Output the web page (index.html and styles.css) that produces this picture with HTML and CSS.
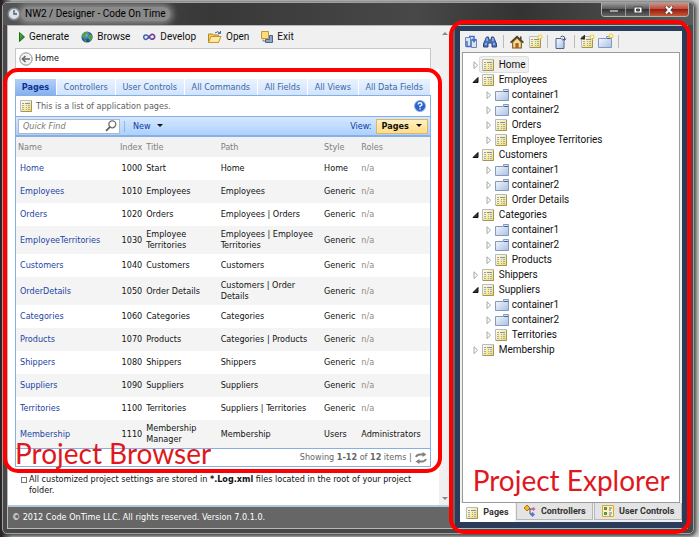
FILE: index.html
```html
<!DOCTYPE html>
<html lang="en">
<head>
  <meta charset="UTF-8">
  <meta name="viewport" content="width=device-width, initial-scale=1.0">
  <title>NW2 / Designer - Code On Time</title>
  <link rel="stylesheet" href="styles.css">
</head>
<body>

  <!-- Icon set -->
  <svg class="sprite" aria-hidden="true">
    <defs>
      <linearGradient id="gYellow" x1="0" y1="0" x2="1" y2="1"><stop offset="0" stop-color="#fffef0"/><stop offset="1" stop-color="#f0dc60"/></linearGradient>
      <linearGradient id="gBlue" x1="0" y1="0" x2="1" y2="1"><stop offset="0" stop-color="#fafcff"/><stop offset="1" stop-color="#a9c0e4"/></linearGradient>
      <linearGradient id="gGreen" x1="0" y1="0" x2="1" y2="1"><stop offset="0" stop-color="#5cc24c"/><stop offset="1" stop-color="#0c5c10"/></linearGradient>
      <radialGradient id="gGlobe" cx="35%" cy="30%"><stop offset="0" stop-color="#9cc8f4"/><stop offset="1" stop-color="#1c4a98"/></radialGradient>
    </defs>
    <symbol id="page" viewBox="0 0 12 12">
      <path d="M.5.5h11v11H.5z" fill="url(#gYellow)" stroke="#b4bcc8"/>
      <path d="M11.500 1v10.500H1" fill="none" stroke="#a4945c"/>
      <path d="M2 3.500h2" stroke="#e08468"/><path d="M5 3.500h5" stroke="#6a94dc"/>
      <path d="M2 5.500h2M2 7.500h2M2 9.500h2M6 5.500h1M8 5.500h2M6 7.500h1M8 7.500h2M6 9.500h1M8 9.500h2" stroke="#a0acc0"/>
    </symbol>
    <symbol id="folder" viewBox="0 0 14 12">
      <path d="M.5 2.500h8v-2h5v11H.5z" fill="url(#gBlue)" stroke="#8499bc"/>
      <path d="M9 2.500h4" stroke="#486498"/>
    </symbol>
    <symbol id="closed" viewBox="0 0 8 8"><path d="M2 .8 5.600 4.200 2 7.600z" fill="#fff" stroke="#a6a6a6"/></symbol>
    <symbol id="open" viewBox="0 0 8 8"><path d="M6 1.500V6.500H1z" fill="#333" stroke="#111"/></symbol>
    <symbol id="star" viewBox="0 0 6 6"><path d="M3 0v6M0 3h6M1 1l4 4M5 1 1 5" stroke="#f4c83c"/><circle cx="3" cy="3" r="1.300" fill="#fff6a0"/></symbol>
    <symbol id="play" viewBox="0 0 6 10"><path d="M.5.5 5.500 5 .5 9.500z" fill="url(#gGreen)" stroke="#18701c"/></symbol>
    <symbol id="globe" viewBox="0 0 12 12">
      <circle cx="6" cy="6" r="5.600" fill="url(#gGlobe)"/>
      <path d="M1.500 3Q4 0 6.500 1L6 3 4.500 4 5 6 2.500 6.500 1 5zM7 5l3-2 1.500 3-1 3-2 1.500L8 8 6.500 7zM3 8l2 1 .5 2-2-.5z" fill="#4ea444"/>
    </symbol>
    <symbol id="loop" viewBox="0 0 14 8">
      <path d="M7 4Q4.800 6.500 3.500 6.500A2.300 2.300 0 1 1 5.500 2.500L9 5.800" fill="none" stroke="#3c62b4" stroke-width="1.600"/>
      <path d="M6 5.300 8.200 2.500Q10 .8 11.500 1.600A2.400 2.400 0 1 1 8.800 5.800" fill="none" stroke="#6e3c98" stroke-width="1.600"/>
    </symbol>
    <symbol id="opened" viewBox="0 0 14 13">
      <path d="M.5 3.500h4l1 1h5v7.500H.5z" fill="#f4cc60" stroke="#b88820"/>
      <path d="M.5 12 3 6h10l-2.500 6z" fill="#ffe9a0" stroke="#c49830"/>
      <path d="M7 2.500Q10 0 12 2.500M12.500.5v2.500h-2.500" fill="none" stroke="#3c64ac"/>
    </symbol>
    <symbol id="exit" viewBox="0 0 12 12">
      <path d="M.5.5h7v7h-7z" fill="#ffdc78" stroke="#c09838"/>
      <path d="M8.500 4.500h3v7h-7v-3h4z" fill="#8ba4d0" stroke="#50648c"/>
      <path d="M2 8.500v1.500h2" fill="none" stroke="#777"/>
    </symbol>
    <symbol id="back" viewBox="0 0 14 14">
      <circle cx="7" cy="7" r="6.200" fill="#f2f2f2" stroke="#8c8c8c"/>
      <path d="M11 7H4M6.500 4 3.500 7l3 3" fill="none" stroke="#666" stroke-width="1.600"/>
    </symbol>
    <symbol id="help" viewBox="0 0 12 12">
      <circle cx="6" cy="6" r="5.500" fill="#2c62c8" stroke="#8ab0ec"/>
      <path d="M4 4.500Q4.200 2.800 6 2.800T8 4.500Q8 5.500 6 6.200v1M6 8.200v1.300" fill="none" stroke="#fff" stroke-width="1.400"/>
    </symbol>
    <symbol id="search" viewBox="0 0 11 11"><circle cx="6.700" cy="4" r="3.200" fill="#fff" stroke="#707070" stroke-width="1.200"/><path d="M4.500 6.300 1 10" stroke="#606060" stroke-width="1.600"/></symbol>
    <symbol id="refresh" viewBox="0 0 12 12"><path d="M1 5Q2 2.500 5 2.500h3M11 7Q10 9.500 7 9.500H4" fill="none" stroke="#808080" stroke-width="2"/><path d="M7.500 0v5l4-2.500zM4.500 7v5l-4-2.500z" fill="#808080"/></symbol>
    <symbol id="sync" viewBox="0 0 14 14">
      <path d="M1.500 2.500h5v9h-5zM7.500 4.500h5v8h-5z" fill="#d8e2f4" stroke="#7084ac"/>
      <path d="M5 1.500h5V6M8 4l2 2.500L12 4M3 6v5.500h4" fill="none" stroke="#3c70cc" stroke-width="1.500"/>
    </symbol>
    <symbol id="binoculars" viewBox="0 0 14 12">
      <path d="M3.500 1h2L6 4h2l.5-3h2l3 7v3H9V7H5v4H.5V8z" fill="#4c74c0" stroke="#2c4884"/>
      <path d="M2 8h2M10 8h2M4 2v3M10 2v3" stroke="#c8dafc"/>
    </symbol>
    <symbol id="house" viewBox="0 0 13 12">
      <path d="M2.500 6v5.500h8V6L6.500 2z" fill="#f8dc90" stroke="#785420"/>
      <path d="M.5 6.500 6.500 1l6 5.500M10 1v3" fill="none" stroke="#4c4428" stroke-width="1.500"/><path d="M5 7h3v4.500H5z" fill="#a86020"/>
    </symbol>
    <symbol id="document" viewBox="0 0 11 14">
      <path d="M.5 3.500h5l3 3v7h-8z" fill="url(#gBlue)" stroke="#506488"/><path d="M5 2Q7 0 9 2v3M7 3.500l2 2 1.500-2" fill="none" stroke="#405880"/>
    </symbol>
    <symbol id="nodes" viewBox="0 0 12 12">
      <path d="M3 0 6 3 3 6 0 3z" fill="#f0b828" stroke="#ac7810"/><path d="M5 4h4M6 4v5h2" fill="none" stroke="#555"/>
      <path d="M9.500 2l2 2-2 2-2-2z" fill="#d45cb0"/><path d="M8.500 7l2.500 2.500L8.500 12 6 9.500z" fill="#5478d4"/>
    </symbol>
    <symbol id="control" viewBox="0 0 12 12">
      <path d="M.5.5h11v11H.5z" fill="#fff2b8" stroke="#e0a82c"/><path d="M2.500 2.500h2v2h-2zM2.500 7.500h2v2h-2z" fill="#6cbc80" stroke="#3c8058"/><path d="M7 3h3M7 5h2M7 8h3M7 10h2" stroke="#4c74b8"/>
    </symbol>
    <symbol id="clock" viewBox="0 0 14 14"><circle cx="7" cy="7" r="5.800" fill="#dce2e8" stroke="#808890" stroke-width="1.500"/><path d="M7 3v4h3" fill="none" stroke="#4c5868" stroke-width="1.300"/></symbol>
  </svg>

  <div class="window">
    <header class="titlebar">
      <h1 class="title"><svg class="i14"><use href="#clock"/></svg><span>NW2 / Designer - Code On Time</span></h1>
      <div class="window-buttons">
        <button aria-label="Minimize"><svg viewBox="0 0 12 8"><path d="M1.500 4h9v2h-9z" fill="#fff" stroke="#444"/></svg></button>
        <button aria-label="Maximize"><svg viewBox="0 0 12 8"><path d="M2 1h8v6H2z" fill="#fff" stroke="#444"/><path d="M4.500 3h3v2h-3z" fill="#555" stroke="#444"/></svg></button>
        <button class="close" aria-label="Close"><svg viewBox="0 0 12 8"><path d="M2.500 0 9.500 8M9.500 0 2.500 8" stroke="#544" stroke-width="3.500"/><path d="M3 .5 9 7.500M9 .5 3 7.500" stroke="#fff" stroke-width="2"/></svg></button>
      </div>
    </header>

    <div class="content">
      <!-- Designer -->
      <main class="designer">
        <div class="scroll-area">
          <div class="view">
            <nav class="menu">
              <button><svg class="play"><use href="#play"/></svg>Generate</button>
              <button><svg class="i12"><use href="#globe"/></svg>Browse</button>
              <button><svg class="loop"><use href="#loop"/></svg>Develop</button>
              <button><svg class="i14"><use href="#opened"/></svg>Open</button>
              <button><svg class="i12"><use href="#exit"/></svg>Exit</button>
            </nav>
            <div class="crumbs"><svg class="i14"><use href="#back"/></svg><span>Home</span></div>

            <section class="browser">
              <nav class="tabs">
                <button class="active">Pages</button>
                <button>Controllers</button>
                <button>User Controls</button>
                <button>All Commands</button>
                <button>All Fields</button>
                <button>All Views</button>
                <button>All Data Fields</button>
              </nav>
              <div class="grid">
                <div class="description"><svg class="i12"><use href="#page"/></svg><span>This is a list of application pages.</span><svg class="i12 push"><use href="#help"/></svg></div>
                <div class="actions">
                  <div class="find"><input type="text" placeholder="Quick Find" aria-label="Quick Find"><svg class="i12"><use href="#search"/></svg></div>
                  <button class="new">New <i class="caret"></i></button>
                  <span class="push">View:</span>
                  <button class="view-picker">Pages <i class="caret"></i></button>
                </div>
                <table class="pages">
                  <colgroup><col class="c-name"><col class="c-index"><col class="c-title"><col class="c-path"><col class="c-style"><col></colgroup>
                  <thead>
                    <tr><th>Name</th><th>Index</th><th>Title</th><th>Path</th><th>Style</th><th>Roles</th></tr>
                  </thead>
                  <tbody>
                    <tr><td><a href="#">Home</a></td><td>1000</td><td>Start</td><td>Home</td><td>Home</td><td class="na">n/a</td></tr>
                    <tr><td><a href="#">Employees</a></td><td>1010</td><td>Employees</td><td>Employees</td><td>Generic</td><td class="na">n/a</td></tr>
                    <tr><td><a href="#">Orders</a></td><td>1020</td><td>Orders</td><td>Employees | Orders</td><td>Generic</td><td class="na">n/a</td></tr>
                    <tr class="tall"><td><a href="#">EmployeeTerritories</a></td><td>1030</td><td>Employee Territories</td><td>Employees | Employee Territories</td><td>Generic</td><td class="na">n/a</td></tr>
                    <tr><td><a href="#">Customers</a></td><td>1040</td><td>Customers</td><td>Customers</td><td>Generic</td><td class="na">n/a</td></tr>
                    <tr class="tall"><td><a href="#">OrderDetails</a></td><td>1050</td><td>Order Details</td><td>Customers | Order Details</td><td>Generic</td><td class="na">n/a</td></tr>
                    <tr><td><a href="#">Categories</a></td><td>1060</td><td>Categories</td><td>Categories</td><td>Generic</td><td class="na">n/a</td></tr>
                    <tr><td><a href="#">Products</a></td><td>1070</td><td>Products</td><td>Categories | Products</td><td>Generic</td><td class="na">n/a</td></tr>
                    <tr><td><a href="#">Shippers</a></td><td>1080</td><td>Shippers</td><td>Shippers</td><td>Generic</td><td class="na">n/a</td></tr>
                    <tr><td><a href="#">Suppliers</a></td><td>1090</td><td>Suppliers</td><td>Suppliers</td><td>Generic</td><td class="na">n/a</td></tr>
                    <tr><td><a href="#">Territories</a></td><td>1100</td><td>Territories</td><td>Suppliers | Territories</td><td>Generic</td><td class="na">n/a</td></tr>
                    <tr class="tall"><td><a href="#">Membership</a></td><td>1110</td><td>Membership Manager</td><td>Membership</td><td>Users</td><td>Administrators</td></tr>
                  </tbody>
                </table>
                <div class="pager"><span>Showing <b>1-12</b> of <b>12</b> items |</span><svg class="i12"><use href="#refresh"/></svg></div>
              </div>
              <div class="callout"><span>Project Browser</span></div>
            </section>

            <ul class="notes">
              <li>All customized project settings are stored in <b>*.Log.xml</b> files located in the root of your project folder.</li>
            </ul>
          </div>
          <div class="scrollbar"><i class="up"></i><i class="down"></i></div>
        </div>
        <footer class="status">© 2012 Code OnTime LLC. All rights reserved. Version 7.0.1.0.</footer>
      </main>

      <!-- Explorer -->
      <aside class="explorer">
        <div class="panel">
          <div class="tools">
            <button aria-label="Synchronize"><svg class="i14"><use href="#sync"/></svg></button>
            <button aria-label="Find"><svg class="i14"><use href="#binoculars"/></svg></button>
            <i class="sep"></i>
            <button aria-label="Home"><svg class="i14"><use href="#house"/></svg></button>
            <button aria-label="New page"><svg class="i12"><use href="#page"/></svg><svg class="star"><use href="#star"/></svg></button>
            <i class="sep"></i>
            <button aria-label="Export"><svg class="i14"><use href="#document"/></svg></button>
            <i class="sep"></i>
            <button aria-label="New child page"><svg class="i12"><use href="#page"/></svg><svg class="corner"><use href="#open"/></svg><svg class="star"><use href="#star"/></svg></button>
            <button aria-label="New container"><svg class="i14"><use href="#folder"/></svg><svg class="star"><use href="#star"/></svg></button>
            <i class="sep"></i>
          </div>
          <ul class="tree">
            <li><a href="#"><svg class="twisty"><use href="#closed"/></svg><span class="selected"><svg class="i12"><use href="#page"/></svg>Home</span></a></li>
            <li><a href="#"><svg class="twisty"><use href="#open"/></svg><span><svg class="i12"><use href="#page"/></svg>Employees</span></a>
              <ul>
                <li><a href="#"><svg class="twisty"><use href="#closed"/></svg><span><svg class="i14"><use href="#folder"/></svg>container1</span></a></li>
                <li><a href="#"><svg class="twisty"><use href="#closed"/></svg><span><svg class="i14"><use href="#folder"/></svg>container2</span></a></li>
                <li><a href="#"><svg class="twisty"><use href="#closed"/></svg><span><svg class="i12"><use href="#page"/></svg>Orders</span></a></li>
                <li><a href="#"><svg class="twisty"><use href="#closed"/></svg><span><svg class="i12"><use href="#page"/></svg>Employee Territories</span></a></li>
              </ul>
            </li>
            <li><a href="#"><svg class="twisty"><use href="#open"/></svg><span><svg class="i12"><use href="#page"/></svg>Customers</span></a>
              <ul>
                <li><a href="#"><svg class="twisty"><use href="#closed"/></svg><span><svg class="i14"><use href="#folder"/></svg>container1</span></a></li>
                <li><a href="#"><svg class="twisty"><use href="#closed"/></svg><span><svg class="i14"><use href="#folder"/></svg>container2</span></a></li>
                <li><a href="#"><svg class="twisty"><use href="#closed"/></svg><span><svg class="i12"><use href="#page"/></svg>Order Details</span></a></li>
              </ul>
            </li>
            <li><a href="#"><svg class="twisty"><use href="#open"/></svg><span><svg class="i12"><use href="#page"/></svg>Categories</span></a>
              <ul>
                <li><a href="#"><svg class="twisty"><use href="#closed"/></svg><span><svg class="i14"><use href="#folder"/></svg>container1</span></a></li>
                <li><a href="#"><svg class="twisty"><use href="#closed"/></svg><span><svg class="i14"><use href="#folder"/></svg>container2</span></a></li>
                <li><a href="#"><svg class="twisty"><use href="#closed"/></svg><span><svg class="i12"><use href="#page"/></svg>Products</span></a></li>
              </ul>
            </li>
            <li><a href="#"><svg class="twisty"><use href="#closed"/></svg><span><svg class="i12"><use href="#page"/></svg>Shippers</span></a></li>
            <li><a href="#"><svg class="twisty"><use href="#open"/></svg><span><svg class="i12"><use href="#page"/></svg>Suppliers</span></a>
              <ul>
                <li><a href="#"><svg class="twisty"><use href="#closed"/></svg><span><svg class="i14"><use href="#folder"/></svg>container1</span></a></li>
                <li><a href="#"><svg class="twisty"><use href="#closed"/></svg><span><svg class="i14"><use href="#folder"/></svg>container2</span></a></li>
                <li><a href="#"><svg class="twisty"><use href="#closed"/></svg><span><svg class="i12"><use href="#page"/></svg>Territories</span></a></li>
              </ul>
            </li>
            <li><a href="#"><svg class="twisty"><use href="#closed"/></svg><span><svg class="i12"><use href="#page"/></svg>Membership</span></a></li>
          </ul>
          <nav class="panel-tabs">
            <button class="active"><svg class="i12"><use href="#page"/></svg>Pages</button>
            <button><svg class="i12"><use href="#nodes"/></svg>Controllers</button>
            <button><svg class="i12"><use href="#control"/></svg>User Controls</button>
          </nav>
        </div>
        <div class="callout"><span>Project Explorer</span></div>
      </aside>
    </div>
  </div>

</body>
</html>
```

FILE: styles.css
```css
* {
  box-sizing: border-box;
}

body {
  margin: 0;
  min-height: 100vh;
  padding: 2px 5px 5px 2px;
  display: flex;
  background: linear-gradient(90deg, #2b2226 2px, #d0d0d0 12px);
  font-family: "DejaVu Sans Condensed", "DejaVu Sans", sans-serif;
  font-size: 9px;
  line-height: 11px;
  color: #111;
}

button {
  padding: 0;
  border: 0;
  background: none;
  font: inherit;
  color: inherit;
  cursor: pointer;
}

a {
  color: inherit;
  text-decoration: none;
}

ul {
  margin: 0;
  padding: 0;
  list-style: none;
}

svg {
  flex: none;
}

.sprite {
  position: absolute;
  width: 0;
  height: 0;
}

.i12 {
  width: 12px;
  height: 12px;
}

.i14 {
  width: 14px;
  height: 14px;
}

.push {
  margin-left: auto;
}

/* Window frame */
.window {
  flex: 1;
  min-width: 0;
  display: flex;
  flex-direction: column;
  padding: 0 5px 4px 4px;
  border: 1px solid #a0a0a0;
  border-radius: 5px;
  background: #484848;
  box-shadow: 1px 1px 4px 1px #333;
}

.titlebar {
  height: 22px;
  display: flex;
  justify-content: space-between;
  margin: 0 -5px 0 -4px;
  padding: 0 4px;
  border-radius: 4px 4px 0 0;
  background: linear-gradient(90deg, #555, #383838 30%, #484848 60%, #333 75%, #5a5a5a);
}

.title {
  margin: 0;
  display: flex;
  align-items: center;
  font: 10px/14px Roboto, sans-serif;
  color: #000;
}

.title span {
  padding: 0 4px;
  border-radius: 8px;
  background: #8a8a8a;
  box-shadow: 0 0 6px 3px #8a8a8a;
}

.title svg {
  position: relative;
}

.window-buttons {
  display: flex;
  height: 14px;
  border: 1px solid #b0b0b0;
  border-top: 0;
  border-radius: 0 0 4px 4px;
  overflow: hidden;
}

.window-buttons button {
  width: 24px;
  display: flex;
  align-items: center;
  justify-content: center;
  border-right: 1px solid #999;
  background: linear-gradient(#999, #555 50%, #333 50%, #666);
}

.window-buttons .close {
  width: 38px;
  border: 0;
  background: linear-gradient(#d09080, #b84838 50%, #981c10 50%, #c85838);
}

.window-buttons svg {
  width: 12px;
  height: 8px;
}

.content {
  flex: 1;
  display: grid;
  grid-template-columns: minmax(0, 445fr) minmax(0, 236fr);
  border: 1px solid #b8b8b8;
  background: #666;
}

/* Designer */
.designer {
  display: flex;
  flex-direction: column;
}

.scroll-area {
  flex: 1;
  display: flex;
  background: #fff;
  border-bottom: 2px solid #b4c8dc;
}

.view {
  flex: 1;
  min-width: 0;
  padding-left: 7px;
  background: linear-gradient(#f0f0f0 43px, #fff 43px);
}

.scrollbar {
  width: 13px;
  margin-left: 8px;
  display: flex;
  flex-direction: column;
  align-items: center;
  justify-content: space-between;
  padding: 6px 0 5px;
  background: #f0f0f0;
}

.scrollbar i {
  border: 3px solid transparent;
}

.scrollbar .up {
  border-top: 0;
  border-bottom-color: #888;
}

.scrollbar .down {
  border-bottom: 0;
  border-top-color: #888;
}

.menu {
  height: 22px;
  display: flex;
  align-items: center;
  gap: 12px;
  margin-right: -8px;
  padding-left: 4px;
  background: #f0f0f0;
  font: 10px/12px Roboto, sans-serif;
}

.menu button {
  display: flex;
  align-items: center;
  gap: 4px;
}

.play {
  width: 6px;
  height: 10px;
}

.loop {
  width: 14px;
  height: 8px;
}

.crumbs {
  height: 21px;
  display: flex;
  align-items: center;
  gap: 2px;
  padding-left: 3px;
  border: 1px solid #c8c8c8;
  background: #fff;
  box-shadow: 8px 0 #f0f0f0;
}

.browser {
  position: relative;
  margin-top: 10px;
}

.tabs {
  height: 16px;
  display: flex;
}

.tabs button {
  flex: auto;
  border-right: 1px solid #fff;
  background: linear-gradient(#eaf3ff, #d0e3fc);
  color: #3a66a4;
}

.tabs .active {
  background: linear-gradient(#b4d0f8, #86b0ee);
  color: #0c3494;
  font-weight: bold;
}

.grid {
  border: 1px solid #86b0e4;
}

.description {
  height: 20px;
  display: flex;
  align-items: center;
  gap: 4px;
  padding: 0 4px;
  color: #606060;
}

.actions {
  height: 21px;
  display: flex;
  align-items: center;
  gap: 4px;
  padding: 0 2px;
  border-top: 1px solid #86b0e4;
  border-bottom: 2px solid #86b0e4;
  background: linear-gradient(#d6e8ff, #acd0ff);
  color: #103c9c;
}

.find {
  width: 102px;
  height: 15px;
  display: flex;
  align-items: center;
  padding: 0 2px 0 4px;
  border: 1px solid #b0b8c4;
  background: #fff;
}

.find input {
  flex: 1;
  min-width: 0;
  padding: 0;
  border: 0;
  outline: 0;
  background: none;
  font: italic 9px/11px "DejaVu Sans Condensed", "DejaVu Sans", sans-serif;
}

.find input::placeholder {
  color: #777;
}

.new {
  padding-left: 8px;
  border-left: 1px solid #90b4e4;
}

.caret {
  display: inline-block;
  margin-left: 4px;
  border: 3px solid transparent;
  border-top-color: #111;
  border-bottom: 0;
  vertical-align: 2px;
}

.view-picker {
  padding: 1px 5px;
  border: 1px solid #d8b868;
  background: linear-gradient(#fff0c0, #ffdc88);
  color: #111;
  font-weight: bold;
}

.pages {
  width: 100%;
  table-layout: fixed;
  border-collapse: collapse;
}

.c-name { width: 22%; }
.c-index { width: 9%; }
.c-title { width: 18%; }
.c-path { width: 25%; }
.c-style { width: 9%; }

.pages tr {
  height: 23px;
}

.pages .tall {
  height: 28px;
}

.pages thead tr {
  height: 20px;
  background: #f2f2f2;
}

.pages tbody tr:nth-child(even) {
  background: #f4f4f4;
}

.pages th {
  padding: 0 2px;
  font-weight: normal;
  text-align: left;
  color: #808080;
}

.pages td {
  padding: 0 2px;
}

.pages td:first-child {
  padding-left: 4px;
}

.pages th:nth-child(2),
.pages td:nth-child(2) {
  text-align: right;
}

.pages a {
  color: #1c44a4;
}

.pages .na {
  color: #8c8c8c;
}

.pager {
  height: 18px;
  display: flex;
  align-items: center;
  justify-content: flex-end;
  gap: 3px;
  padding-right: 3px;
  border-top: 1px solid #86b0e4;
  color: #666;
}

.notes {
  padding: 7px 10px 9px 14px;
}

.notes li {
  position: relative;
}

.notes li::before {
  content: "";
  position: absolute;
  left: -8px;
  top: 3px;
  width: 4px;
  height: 4px;
  border: 1px solid #777;
}

.status {
  height: 21px;
  padding: 5px 4px;
  background: #666;
  color: #fff;
}

/* Explorer */
.explorer {
  position: relative;
  display: flex;
  padding: 5px 5px 6px;
  margin-left: 3px;
  background: #2b3c5a;
}

.panel {
  flex: 1;
  min-width: 0;
  display: flex;
  flex-direction: column;
  padding: 0 2px;
  background: #f0f0f0;
}

.tools {
  height: 21px;
  display: flex;
  align-items: center;
  gap: 5px;
  padding-left: 2px;
}

.tools button {
  position: relative;
  display: flex;
}

.star,
.corner {
  position: absolute;
  top: -2px;
  width: 6px;
  height: 6px;
}

.star {
  right: -2px;
}

.corner {
  left: -1px;
}

.sep {
  width: 1px;
  height: 13px;
  margin: 0 1px;
  background: #bbb;
}

.tree {
  font: 10px/15px Roboto, sans-serif;
}

.panel > .tree {
  flex: 1;
  padding: 4px 0 0 9px;
  border: 1px solid #9a9a9a;
  background: #fff;
}

.tree ul {
  padding-left: 13px;
}

.tree a {
  height: 15px;
  display: flex;
  align-items: center;
}

.tree a span {
  display: flex;
  align-items: center;
  gap: 5px;
  padding: 0 2px;
}

.tree .i14 {
  margin-right: -2px;
}

.tree .selected {
  border-radius: 2px;
  background: #f0f0f0;
  box-shadow: 0 0 0 1px #ddd;
}

.twisty {
  width: 8px;
  height: 8px;
}

.panel-tabs {
  height: 19px;
  display: flex;
  gap: 1px;
  margin: 0 -2px;
  font: bold 9px/11px Roboto, sans-serif;
}

.panel-tabs button {
  flex: auto;
  height: 17px;
  display: flex;
  align-items: center;
  justify-content: center;
  gap: 5px;
  border: 1px solid #b8b8b8;
  border-top: 0;
  background: #e4e4e4;
  color: #333;
}

.panel-tabs .active {
  height: 19px;
  border: 0;
  background: #fff;
}

/* Callouts */
.callout {
  position: absolute;
  border: 4px solid #f00;
  border-radius: 15px;
  color: #e0181e;
  font: 28px/28px Lato, sans-serif;
  white-space: nowrap;
  pointer-events: none;
  display: flex;
  align-items: flex-end;
}

.browser .callout {
  inset: -11px -11px -6px -12px;
}

.browser .callout span {
  padding: 0 8px 2px;
}

.explorer .callout {
  inset: -6px -4px -6px -6px;
}

.explorer .callout span {
  padding: 0 20px 36px;
}
```
